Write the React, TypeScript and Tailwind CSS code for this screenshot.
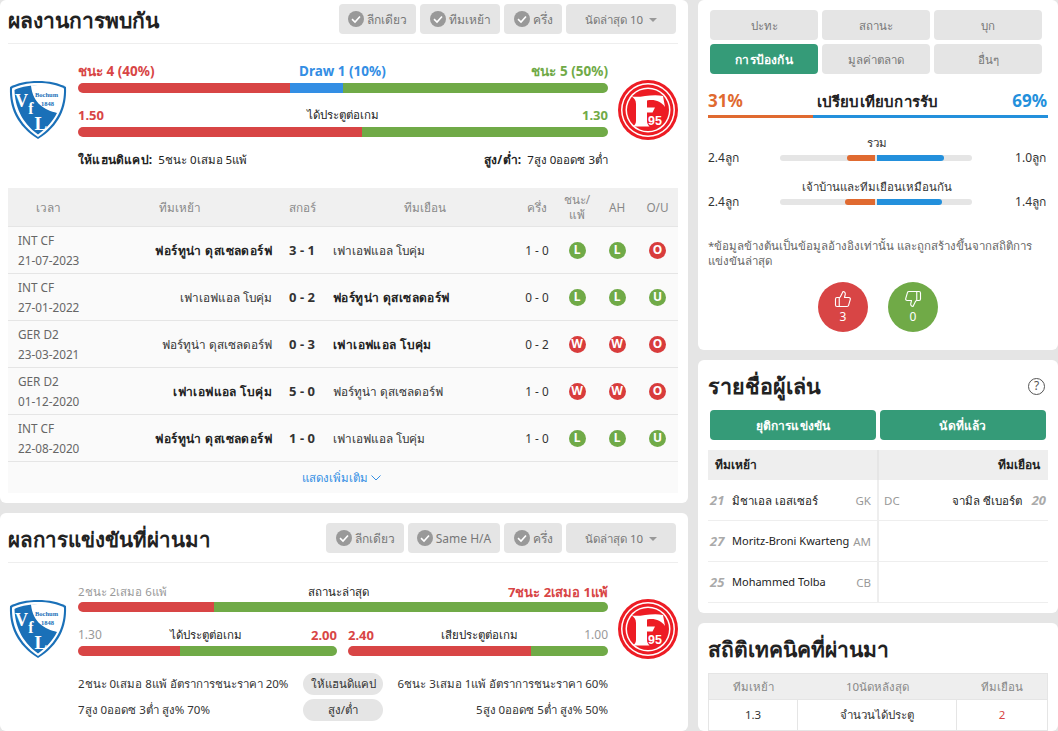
import { ThumbsUp, ThumbsDown } from "lucide-react";

function Check() {
  return (
    <svg width="16" height="16" viewBox="0 0 16 16" className="shrink-0 -mt-[2px]">
      <circle cx="8" cy="8" r="8" fill="#999999" />
      <path d="M4 8.2 7 11 12 5.5" fill="none" stroke="#ffffff" strokeWidth="1.6" />
    </svg>
  );
}

function FilterBtn({ label, w }: { label: string; w: string }) {
  return (
    <div className={`${w} h-[30px] pt-[2px] rounded bg-[#e5e5e5] text-[#777] text-[12px] flex items-center justify-center gap-[3px]`}>
      <Check />
      <span>{label}</span>
    </div>
  );
}

function LastBtn() {
  return (
    <div className="w-[110px] h-[30px] pt-[2px] rounded bg-[#e5e5e5] text-[#777] text-[11.5px] flex items-center justify-center gap-[6px]">
      <span>นัดล่าสุด 10</span>
      <span className="w-0 h-0 border-x-[4px] border-x-transparent border-t-[4px] border-t-[#999] -mt-[1px]" />
    </div>
  );
}

function Bochum() {
  return (
    <svg width="58" height="60" viewBox="0 0 58 60" className="shrink-0">
      <path d="M29 1C40 1 50 3 57 7 58 28 50 46 29 59 8 46 0 28 1 7 8 3 18 1 29 1Z" fill="#1a70b8" />
      <path d="M29 3C39 3 49 5 55 8.5 55.500 27 48 44 29 57 10 44 2.500 27 3 8.500 9 5 19 3 29 3Z" fill="#ffffff" />
      <path d="M29 5.500C18 5.500 10 7.500 5.500 10 6 26 12 42 29 54.500 38 48 44 41 48 33 36 30 24 24 22 5.800Z" fill="#1a70b8" />
      <text x="6" y="27" fontFamily="Liberation Serif, serif" fontWeight="700" fontSize="18" fill="#ffffff">V</text>
      <text x="19.200" y="34" fontFamily="Liberation Serif, serif" fontWeight="700" fontSize="16" fill="#ffffff">f</text>
      <text x="25.500" y="50" fontFamily="Liberation Serif, serif" fontWeight="700" fontSize="19" fill="#ffffff">L</text>
      <text x="26" y="17" fontFamily="Liberation Serif, serif" fontWeight="700" fontSize="6.5" fill="#1a70b8">Bochum</text>
      <text x="32" y="25.500" fontFamily="Liberation Serif, serif" fontWeight="700" fontSize="6.5" fill="#1a70b8">1848</text>
    </svg>
  );
}

function Fortuna() {
  return (
    <svg width="60" height="60" viewBox="0 0 60 60" className="shrink-0">
      <circle cx="30" cy="30" r="30" fill="#ed1c24" />
      <circle cx="30" cy="30" r="27" fill="#ffffff" />
      <circle cx="30" cy="30" r="25.500" fill="#ed1c24" />
      <circle cx="30" cy="30" r="22.500" fill="#ffffff" />
      <circle cx="30" cy="30" r="21" fill="#ed1c24" />
      <path d="M13 16C20 19 33 13 45 16L47 27C43 21 36 19 29 20.500V27.500H37L34.500 32.500H29V41C29 43 30 45 31.500 46.500H15C17 45 18 43 18 41V24C18 20 16 18 13 16Z" fill="#ffffff" />
      <text x="30" y="45" fontFamily="Liberation Sans, sans-serif" fontWeight="700" fontSize="12.500" fill="#ffffff">95</text>
    </svg>
  );
}

function Bar({ parts }: { parts: [string, string][] }) {
  return (
    <div className="h-[10px] rounded-full overflow-hidden flex">
      {parts.map(([c, w], i) => (
        <div key={i} className={c} style={{ width: w }} />
      ))}
    </div>
  );
}

const RED = "bg-[#d84545]";
const BLUE = "bg-[#338ee4]";
const GREEN = "bg-[#70aa47]";

function Badge({ v }: { v: string }) {
  const c = v === "L" || v === "U" ? "bg-[#70aa47]" : "bg-[#d83c3c]";
  return (
    <div className="flex justify-center -mt-[2px]">
      <div className={`${c} w-[17px] h-[17px] rounded-full text-white text-xs font-bold flex items-center justify-center`}>{v}</div>
    </div>
  );
}

const rows = [
  ["INT CF", "21-07-2023", "ฟอร์ทูน่า ดุสเซลดอร์ฟ", "3 - 1", "เฟาเอฟแอล โบคุ่ม", "1 - 0", "L", "L", "O", "h"],
  ["INT CF", "27-01-2022", "เฟาเอฟแอล โบคุ่ม", "0 - 2", "ฟอร์ทูน่า ดุสเซลดอร์ฟ", "0 - 0", "L", "L", "U", "a"],
  ["GER D2", "23-03-2021", "ฟอร์ทูน่า ดุสเซลดอร์ฟ", "0 - 3", "เฟาเอฟแอล โบคุ่ม", "0 - 2", "W", "W", "O", "a"],
  ["GER D2", "01-12-2020", "เฟาเอฟแอล โบคุ่ม", "5 - 0", "ฟอร์ทูน่า ดุสเซลดอร์ฟ", "1 - 0", "W", "W", "O", "h"],
  ["INT CF", "22-08-2020", "ฟอร์ทูน่า ดุสเซลดอร์ฟ", "1 - 0", "เฟาเอฟแอล โบคุ่ม", "1 - 0", "L", "L", "U", "h"],
];

const GRID = "grid grid-cols-[80px_184px_54px_191px_40px_40px_40px_41px] items-center";

function H2H() {
  return (
    <section className="bg-white rounded-md pl-2 pr-[10px] pb-[10px]">
      <div className="h-[44px] border-b border-[#eeeeee] flex items-start justify-between pt-[4px] pr-[2px]">
        <h2 className="text-[21px] font-bold text-[#222] leading-[32px]">ผลงานการพบกัน</h2>
        <div className="flex gap-[4px]">
          <FilterBtn label="ลีกเดียว" w="w-[77px]" />
          <FilterBtn label="ทีมเหย้า" w="w-[80px]" />
          <FilterBtn label="ครึ่ง" w="w-[58px]" />
          <LastBtn />
        </div>
      </div>
      <div className="flex gap-[11px] pt-[17px] h-[144px] items-start">
        <div className="pt-[19px] pl-[1px]"><Bochum /></div>
        <div className="w-[530px]">
          <div className="flex justify-between text-[13.5px] font-bold leading-[20px] pb-[2px] relative">
            <span className="text-[#d84545]">ชนะ 4 (40%)</span>
            <span className="text-[#338ee4] absolute left-[221px]">Draw 1 (10%)</span>
            <span className="text-[#70aa47]">ชนะ 5 (50%)</span>
          </div>
          <Bar parts={[[RED, "40%"], [BLUE, "10%"], [GREEN, "50%"]]} />
          <div className="flex justify-between items-center text-[13px] leading-[20px] pb-[2px] mt-[12px]">
            <span className="text-[#d84545] font-bold">1.50</span>
            <span className="text-[11.5px] text-[#222]">ได้ประตูต่อเกม</span>
            <span className="text-[#70aa47] font-bold">1.30</span>
          </div>
          <Bar parts={[[RED, "53.5%"], [GREEN, "46.5%"]]} />
          <div className="flex justify-between text-[11.5px] text-[#222] mt-[13px] leading-[20px]">
            <span><b className="font-bold text-xs tracking-[0.2px]">ให้แฮนดิแคป:</b>&nbsp; 5ชนะ 0เสมอ 5แพ้</span>
            <span><b className="font-bold text-xs tracking-[0.2px]">สูง/ต่ำ:</b>&nbsp; 7สูง 0ออดซ 3ต่ำ</span>
          </div>
        </div>
        <div className="pt-[19px] -ml-px"><Fortuna /></div>
      </div>
      <div className="text-[11.75px]">
        <div className={`${GRID} h-[39px] pt-[2px] bg-[#f0f0f0] border-b border-[#e5e5e5] text-[#888] text-center`}>
          <span>เวลา</span>
          <span>ทีมเหย้า</span>
          <span className="text-right pr-[10px]">สกอร์</span>
          <span className="pl-[7px]">ทีมเยือน</span>
          <span>ครึ่ง</span>
          <span className="leading-[15px] -mt-[2px]">ชนะ/<br />แพ้</span>
          <span>AH</span>
          <span>O/U</span>
        </div>
        {rows.map((r, i) => (
          <div key={i} className={`${GRID} h-[47px] pt-[2px] bg-[#fafafa] border-b border-[#e5e5e5] text-[#333]`}>
            <div className="pl-[10px] leading-[20px] text-[#666] -mt-[2px]">
              <div>{r[0]}</div>
              <div>{r[1]}</div>
            </div>
            <span className={`text-right ${r[9] === "h" ? "font-bold text-[#222] text-xs tracking-[0.4px]" : ""}`}>{r[2]}</span>
            <span className="text-center font-bold text-[13px] text-[#333] pl-[6px]">{r[3]}</span>
            <span className={`pl-[7px] ${r[9] === "a" ? "font-bold text-[#222] text-xs tracking-[0.4px]" : ""}`}>{r[4]}</span>
            <span className="text-center">{r[5]}</span>
            <Badge v={r[6]} />
            <Badge v={r[7]} />
            <Badge v={r[8]} />
          </div>
        ))}
        <div className="h-[31px] bg-[#fafafa] text-[#338ee4] flex items-center justify-center gap-[3px] pr-[3px]">
          <span className="text-[11.5px]">แสดงเพิ่มเติม</span>
          <svg width="10" height="6" viewBox="0 0 10 6"><path d="M.5.5 5 5 9.500.5" fill="none" stroke="#338ee4" /></svg>
        </div>
      </div>
    </section>
  );
}

function Pill({ t }: { t: string }) {
  return <span className="w-20 h-[22px] rounded-full bg-[#e5e5e5] text-[#333] text-[11.5px] flex items-center justify-center">{t}</span>;
}

function Recent() {
  return (
    <section className="bg-white rounded-md pl-2 pr-[10px] flex-1">
      <div className="h-[50px] border-b border-[#eeeeee] flex items-start justify-between pt-[10px] pr-[2px]">
        <h2 className="text-[20.5px] font-bold text-[#222] leading-[32px]">ผลการแข่งขันที่ผ่านมา</h2>
        <div className="flex gap-[4px]">
          <FilterBtn label="ลีกเดียว" w="w-[78px]" />
          <FilterBtn label="Same H/A" w="w-[92px]" />
          <FilterBtn label="ครึ่ง" w="w-[58px]" />
          <LastBtn />
        </div>
      </div>
      <div className="flex items-start gap-[11px] pt-[19px]">
        <div className="pt-[17px] pl-[1px]"><Bochum /></div>
        <div className="w-[530px]">
          <div className="grid grid-cols-[1fr_auto_1fr] text-[11.5px] leading-[20px]">
            <span className="text-[#999]">2ชนะ 2เสมอ 6แพ้</span>
            <span className="text-[#222] pr-[10px]">สถานะล่าสุด</span>
            <span className="text-[#d84545] font-bold text-[13px] text-right">7ชนะ 2เสมอ 1แพ้</span>
          </div>
          <Bar parts={[[RED, "25.7%"], [GREEN, "74.3%"]]} />
          <div className="flex gap-[11px] mt-[12px]">
            <div className="w-[259px]">
              <div className="flex justify-between items-center text-[11.5px] leading-[22px]">
                <span className="text-[#999] text-xs">1.30</span>
                <span className="text-[#222]">ได้ประตูต่อเกม</span>
                <span className="text-[#d84545] font-bold text-[13px]">2.00</span>
              </div>
              <Bar parts={[[RED, "39.3%"], [GREEN, "60.7%"]]} />
            </div>
            <div className="w-[260px]">
              <div className="flex justify-between items-center text-[11.5px] leading-[22px]">
                <span className="text-[#d84545] font-bold text-[13px]">2.40</span>
                <span className="text-[#222]">เสียประตูต่อเกม</span>
                <span className="text-[#999] text-xs">1.00</span>
              </div>
              <Bar parts={[[RED, "70.5%"], [GREEN, "29.5%"]]} />
            </div>
          </div>
          <div className="flex justify-between items-center text-[11.5px] text-[#333] mt-[17px]">
            <span className="w-[225px]">2ชนะ 0เสมอ 8แพ้ อัตราการชนะราคา 20%</span>
            <Pill t="ให้แฮนดิแคป" />
            <span className="w-[225px] text-right">6ชนะ 3เสมอ 1แพ้ อัตราการชนะราคา 60%</span>
          </div>
          <div className="flex justify-between items-center text-[11.5px] text-[#333] mt-[4px]">
            <span className="w-[225px]">7สูง 0ออดซ 3ต่ำ สูง% 70%</span>
            <Pill t="สูง/ต่ำ" />
            <span className="w-[225px] text-right">5สูง 0ออดซ 5ต่ำ สูง% 50%</span>
          </div>
        </div>
        <div className="pt-[17px] -ml-px"><Fortuna /></div>
      </div>
    </section>
  );
}

function Tab({ t, active }: { t: string; active?: boolean }) {
  return (
    <div className={`h-[30px] pt-[2px] rounded flex items-center justify-center ${active ? "bg-[#359b78] text-white font-bold text-xs tracking-[0.2px]" : "bg-[#e5e5e5] text-[#777] text-[11.5px]"}`}>
      {t}
    </div>
  );
}

function CompareRow({ label, l, r, o, b }: { label: string; l: string; r: string; o: string; b: string }) {
  return (
    <div className="text-[11.5px] text-[#333]">
      <div className="text-center leading-[14px] pr-[2px]">{label}</div>
      <div className="grid grid-cols-[72px_192px_76px] items-center h-[14px]">
        <span className="text-xs">{l}</span>
        <div className="h-[6px] rounded-full bg-[#e5e5e5] flex gap-[2px] pr-[1px]">
          <div className="flex-1 flex justify-end"><div className="h-full bg-[#e06a30] rounded-l-full" style={{ width: o }} /></div>
          <div className="flex-1 flex"><div className="h-full bg-[#2390dc] rounded-r-full" style={{ width: b }} /></div>
        </div>
        <span className="text-right pr-[2px] text-xs">{r}</span>
      </div>
    </div>
  );
}

function Defence() {
  return (
    <section className="bg-white rounded-md px-[10px] h-[351px]">
      <div className="pt-[10px] pl-[2px] pr-[6px] grid grid-cols-3 gap-[4px]">
        <Tab t="ปะทะ" />
        <Tab t="สถานะ" />
        <Tab t="บุก" />
        <Tab t="การป้องกัน" active />
        <Tab t="มูลค่าตลาด" />
        <Tab t="อื่นๆ" />
      </div>
      <div className="flex items-center justify-between h-[30px] mt-[12px] pr-[1px]">
        <span className="text-[17px] font-bold text-[#e06a30]">31%</span>
        <span className="text-[15px] font-bold text-[#222] tracking-[0.2px]">เปรียบเทียบการรับ</span>
        <span className="text-[17px] font-bold text-[#2390dc]">69%</span>
      </div>
      <div className="flex h-[3px] mt-[-1px]">
        <div className="bg-[#e06a30] w-[31%]" />
        <div className="bg-[#2390dc] w-[69%]" />
      </div>
      <div className="mt-[18px]"><CompareRow label="รวม" l="2.4ลูก" r="1.0ลูก" o="28px" b="67px" /></div>
      <div className="mt-[16px]"><CompareRow label="เจ้าบ้านและทีมเยือนเหมือนกัน" l="2.4ลูก" r="1.4ลูก" o="30px" b="65px" /></div>
      <p className="mt-[30px] text-[11.5px] leading-[15px] text-[#666]">*ข้อมูลข้างต้นเป็นข้อมูลอ้างอิงเท่านั้น และถูกสร้างขึ้นจากสถิติการ<br />แข่งขันล่าสุด</p>
      <div className="flex justify-center gap-5 mt-[14px]">
        <div className="w-[50px] h-[50px] rounded-full bg-[#d84545] text-white flex flex-col items-center justify-center text-xs">
          <ThumbsUp size={18} strokeWidth={1.5} />
          <span className="mt-[2px] leading-[14px]">3</span>
        </div>
        <div className="w-[50px] h-[50px] rounded-full bg-[#70aa47] text-white flex flex-col items-center justify-center text-xs">
          <ThumbsDown size={18} strokeWidth={1.5} />
          <span className="mt-[2px] leading-[14px]">0</span>
        </div>
      </div>
    </section>
  );
}

function PlayerRow({ n, name, pos, latin, right }: { n: string; name: string; pos: string; latin?: boolean; right?: [string, string, string] }) {
  return (
    <div className="grid grid-cols-[171px_169px] h-[41px] text-[11.5px] border-b border-[#eeeeee]">
      <div className="flex items-center border-r-2 border-[#eeeeee] pl-[2px] pr-[6px]">
        <span className="w-[22px] text-[13px] italic font-bold text-[#aaa]">{n}</span>
        <span className={`text-[#222] flex-1 whitespace-nowrap ${latin ? "text-[11px]" : ""}`}>{name}</span>
        <span className="text-[#999]">{pos}</span>
      </div>
      <div className="flex items-center pl-[5px] pr-[2px]">
        {right && (
          <>
            <span className="text-[#999]">{right[0]}</span>
            <span className="text-[#222] flex-1 text-right">{right[1]}</span>
            <span className="w-[24px] text-right text-[13px] italic font-bold text-[#aaa]">{right[2]}</span>
          </>
        )}
      </div>
    </div>
  );
}

function Players() {
  return (
    <section className="bg-white rounded-md px-[10px] h-[253px]">
      <div className="h-[50px] pt-[2px] flex items-center justify-between pr-[3px]">
        <h2 className="text-[21.5px] font-bold text-[#222]">รายชื่อผู้เล่น</h2>
        <div className="w-[17px] h-[17px] rounded-full border border-[#555] text-[#555] text-xs flex items-center justify-center">?</div>
      </div>
      <div className="grid grid-cols-2 gap-[4px] px-[2px]">
        <div className="h-[30px] pt-[2px] rounded bg-[#359b78] text-white font-bold text-xs tracking-[0.2px] flex items-center justify-center">ยุติการแข่งขัน</div>
        <div className="h-[30px] pt-[2px] rounded bg-[#359b78] text-white font-bold text-xs tracking-[0.2px] flex items-center justify-center">นัดที่แล้ว</div>
      </div>
      <div className="mt-[10px] grid grid-cols-[171px_169px] h-[30px] bg-[#eeeeee] text-xs font-bold text-[#222]">
        <div className="flex items-center pl-[7px] border-r-2 border-[#e5e5e5]">ทีมเหย้า</div>
        <div className="flex items-center justify-end pr-[8px]">ทีมเยือน</div>
      </div>
      <PlayerRow n="21" name="มิชาเอล เอสเซอร์" pos="GK" right={["DC", "จามิล ซีเบอร์ต", "20"]} />
      <PlayerRow n="27" name="Moritz-Broni Kwarteng" pos="AM" latin />
      <PlayerRow n="25" name="Mohammed Tolba" pos="CB" latin />
    </section>
  );
}

function Tech() {
  return (
    <section className="bg-white rounded-md px-[10px] flex-1">
      <h2 className="text-[21px] font-bold text-[#222] h-[50px] pt-[4px] flex items-center">สถิติเทคนิคที่ผ่านมา</h2>
      <div className="border border-[#e5e5e5] text-[11.5px]">
        <div className="grid grid-cols-[89px_159px_90px] h-[25px] bg-[#eeeeee] text-[#888] text-center items-center">
          <span>ทีมเหย้า</span>
          <span>10นัดหลังสุด</span>
          <span>ทีมเยือน</span>
        </div>
        <div className="grid grid-cols-[89px_159px_90px] h-[31px] border-t border-[#e5e5e5] text-center items-center text-[#333]">
          <span className="h-full flex items-center justify-center border-r border-[#e5e5e5]">1.3</span>
          <span className="h-full flex items-center justify-center border-r border-[#e5e5e5]">จำนวนได้ประตู</span>
          <span className="text-[#d84545]">2</span>
        </div>
      </div>
    </section>
  );
}

export default function App() {
  return (
    <div className="w-[1058px] h-[731px] overflow-hidden bg-[#e5e5e5] flex gap-[10px] font-['Noto_Sans','DejaVu_Sans',sans-serif]">
      <div className="w-[688px] flex flex-col gap-[10px]">
        <H2H />
        <Recent />
      </div>
      <div className="w-[360px] flex flex-col gap-[10px]">
        <Defence />
        <Players />
        <Tech />
      </div>
    </div>
  );
}
